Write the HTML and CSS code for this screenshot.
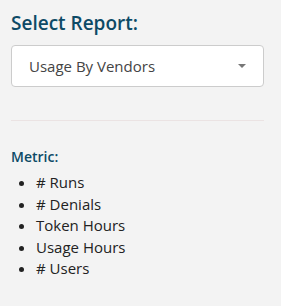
FILE: index.html
```html
<!DOCTYPE html>
<html lang="en">
<head>
    <meta charset="UTF-8">
    <meta name="viewport" content="width=device-width, initial-scale=1.0">
    <title>Report Options</title>
    <link rel="stylesheet" href="styles.css">
</head>
<body>
    <div class="sidebar">
        <h2 class="title">Select Report:</h2>
        <div class="select-box">
            <span class="select-value">Usage By Vendors</span>
            <span class="select-arrow"></span>
        </div>
        <hr class="divider">
        <p class="metric-label">Metric:</p>
        <ul class="metric-list">
            <li># Runs</li>
            <li># Denials</li>
            <li>Token Hours</li>
            <li>Usage Hours</li>
            <li># Users</li>
        </ul>
    </div>
</body>
</html>
```

FILE: styles.css
```css
body {
    font-family: "Open Sans", sans-serif;
    margin: 0;
    padding: 0;
    background-color: #f3f3f3;
    color: #222;
}
.sidebar {
    width: 253px;
    padding: 10px 0 0 11px;
}
.title {
    margin: 0 0 9px 0;
    font-size: 19px;
    font-weight: 600;
    color: #0d4a66;
    line-height: 26px;
}
.select-box {
    display: flex;
    align-items: center;
    justify-content: space-between;
    height: 40px;
    padding: 0 17px 0 17px;
    background-color: #ffffff;
    border: 1px solid #cccccc;
    border-radius: 4px;
}
.select-value {
    font-size: 15px;
    color: #444;
}
.select-arrow {
    width: 0;
    height: 0;
    border-left: 4px solid transparent;
    border-right: 4px solid transparent;
    border-top: 4px solid #777;
}
.divider {
    margin: 33px 0 0 0;
    border: 0;
    border-top: 1px solid #ebe3e3;
}
.metric-label {
    margin: 26px 0 5px 0;
    font-size: 14px;
    font-weight: 600;
    color: #0d4a66;
    line-height: 20px;
}
.metric-list {
    margin: 0;
    padding-left: 25px;
    font-size: 15px;
    line-height: 21.5px;
}
```
